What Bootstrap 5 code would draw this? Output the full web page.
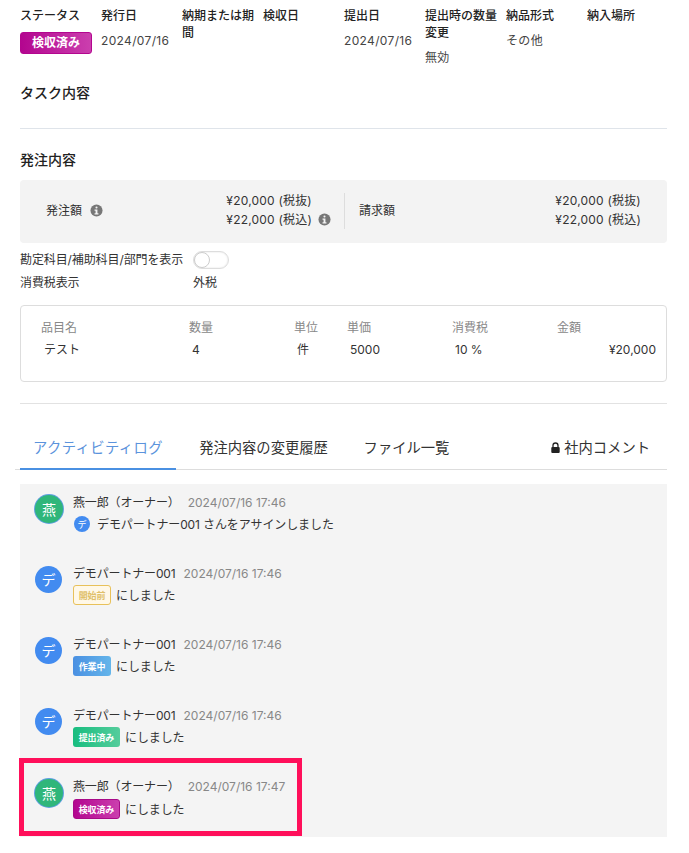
<!doctype html>
<html lang="ja"><head><meta charset="utf-8">
<link href="https://cdn.jsdelivr.net/npm/bootstrap@5.3.0/dist/css/bootstrap.min.css" rel="stylesheet">
<style>
body{font-family:"Inter","Noto Sans CJK JP",sans-serif;font-size:12px;color:#333;background:#fff;line-height:17px}
.pg{padding:7px 22px 0 20px;width:689px}
.meta-cell{width:81px;flex:none;padding-right:6px}
.meta-h{font-weight:500;color:#222;margin-bottom:8px}
.meta-v{color:#444;letter-spacing:.35px}
.st-badge{display:block;width:72px;height:22px;line-height:20px;text-align:center;color:#fff;font-weight:700;font-size:12px;border-radius:3px;background:linear-gradient(90deg,#b3068f,#cb3fae);border:1px solid #b3068f}
.sec-t{font-size:14px;font-weight:500;color:#222;line-height:20px}
.rule1{border:0;border-top:1px solid #dfe4ea;opacity:1;margin:0}
.rule2{border:0;border-top:1px solid #e2e2e2;opacity:1;margin:0}
.sumbox{background:#f3f3f3;border-radius:4px;height:63px;margin-top:10px;padding-bottom:2px}
.sum-l{width:324px;padding-left:26px;padding-right:13px}
.sum-r{flex:1;padding-left:14px;padding-right:26px}
.sum-sep{width:1px;height:36px;background:#ddd}
.sum-v{line-height:18.5px;letter-spacing:.2px}
.sum-row{gap:6px}
.info-i{width:13px;height:13px;flex:none;display:block}
.opt-k{width:173px;letter-spacing:-.1px}
.tgl{width:36px;height:18px;border:1px solid #ddd;border-radius:9px;background:#fff;position:relative;box-shadow:inset 0 0 2px #ddd}
.tgl::before{content:"";position:absolute;left:0;top:0;width:16px;height:16px;border-radius:50%;background:#fff;border:1px solid #ccc}
.itembox{border:1px solid #ddd;border-radius:4px;height:77px;margin-top:13px;padding:13px 10px 0 20px}
.ic1{width:148px}.ic2{width:105px}.ic3{width:53px}.ic4{width:105px}.ic5{width:105px}.ic6{flex:1}
.ihead{color:#888}
.ival{color:#333;padding-top:5px}
.ival>div{padding-left:3px}
.tabsx{margin-top:24px;border-bottom:1px solid #ddd;height:42px;margin-left:-5px;padding-left:5px;font-size:14.3px}
.tabx{height:42px;line-height:24px;padding-top:8px;color:#333;width:156px;text-align:center;flex:none}
.tabx.on{color:#5b93dc;border-bottom:2px solid #4a90e2;letter-spacing:.4px}
.logbox{background:#f4f4f4;margin-top:14px;padding:10px 0 0 0;height:353px}
.logitem{display:flex;height:71px;padding-left:15px;gap:9px}
.logitem.short{height:51px}
.logitem.hilite{height:78px;width:283px;margin-left:-1px;border:5px solid #ff0f5a;padding:15px 0 0 11px}
.logitem.hilite .msg{margin-top:3px}
.av{width:27px;height:27px;border-radius:50%;display:flex;align-items:center;justify-content:center;color:#fff;font-size:14px;background:#428bf0;flex:none;margin-top:1px;margin-left:0;margin-right:2px}
.av.g{width:28px;height:28px;margin:1px 1px 0 0;background:#2fb67a;box-shadow:0 0 0 1px #5e9fe0}
.nm{color:#333;line-height:18px;letter-spacing:-.15px}
.tm{color:#888;margin-left:8px;letter-spacing:0}
.av-s{width:16px;height:16px;border-radius:50%;background:#428bf0;color:#fff;font-size:9px;display:flex;align-items:center;justify-content:center;margin:0 7px 0 1px}
.msg{display:flex;align-items:center;margin-top:2px;height:20px;color:#333;letter-spacing:-.12px}
.tag{display:flex;align-items:center;justify-content:center;height:20px;border-radius:3px;font-size:9px;font-weight:700;color:#fff;margin-right:5px;width:38px}
.tag.w{background:#fff8e8;border:1px solid #e8c15a;color:#e0c06a}
.tag.b{background:linear-gradient(90deg,#4a90e2,#64b5ea)}
.tag.gr{background:linear-gradient(90deg,#17bd7f,#55cd9c);width:47px}
.tag.p{background:linear-gradient(90deg,#b3068f,#cb3fae);width:47px;border:1px solid #a80a88}
</style></head><body>
<svg width="0" height="0" class="d-block position-absolute"><defs><symbol id="ii" viewBox="0 0 14 14"><circle cx="7" cy="7" r="6.5" fill="#777"/><rect x="5.9" y="2.6" width="2.2" height="2.2" rx="1" fill="#f3f3f3"/><path d="M4.9 6h3.1v4h1.1v1.2H4.9V10H6V7.2H4.9z" fill="#f3f3f3"/></symbol></defs></svg>
<div class="pg">
 <div class="d-flex" style="height:75px">
  <div class="meta-cell"><div class="meta-h">ステータス</div><span class="st-badge">検収済み</span></div>
  <div class="meta-cell"><div class="meta-h">発行日</div><div class="meta-v">2024/07/16</div></div>
  <div class="meta-cell"><div class="meta-h">納期または期間</div></div>
  <div class="meta-cell"><div class="meta-h">検収日</div></div>
  <div class="meta-cell"><div class="meta-h">提出日</div><div class="meta-v">2024/07/16</div></div>
  <div class="meta-cell"><div class="meta-h">提出時の数量変更</div><div class="meta-v">無効</div></div>
  <div class="meta-cell"><div class="meta-h">納品形式</div><div class="meta-v">その他</div></div>
  <div class="meta-cell"><div class="meta-h">納入場所</div></div>
 </div>
 <div class="sec-t" style="margin-top:1px">タスク内容</div>
 <hr class="rule1" style="margin-top:25px">
 <div class="sec-t" style="margin-top:21px">発注内容</div>
 <div class="sumbox d-flex align-items-center">
  <div class="sum-l d-flex align-items-center justify-content-between">
   <div class="d-flex align-items-center gap-2"><span>発注額</span><svg class="info-i"><use href="#ii"/></svg></div>
   <div class="sum-v"><div>¥20,000 (税抜)</div><div class="d-flex align-items-center sum-row"><span>¥22,000 (税込)</span><svg class="info-i"><use href="#ii"/></svg></div></div>
  </div>
  <div class="sum-sep"></div>
  <div class="sum-r d-flex align-items-center justify-content-between"><span>請求額</span><div class="sum-v"><div>¥20,000 (税抜)</div><div>¥22,000 (税込)</div></div></div>
 </div>
 <div class="d-flex align-items-center" style="margin-top:7px;height:19px"><div class="opt-k">勘定科目/補助科目/部門を表示</div><div class="tgl"></div></div>
 <div class="d-flex align-items-center" style="margin-top:4px;height:19px"><div class="opt-k">消費税表示</div><div>外税</div></div>
 <div class="itembox d-flex">
  <div class="ic1 ihead">品目名<div class="ival"><div>テスト</div></div></div>
  <div class="ic2 ihead">数量<div class="ival"><div>4</div></div></div>
  <div class="ic3 ihead">単位<div class="ival"><div>件</div></div></div>
  <div class="ic4 ihead">単価<div class="ival"><div>5000</div></div></div>
  <div class="ic5 ihead">消費税<div class="ival"><div>10 %</div></div></div>
  <div class="ic6 ihead">金額<div class="ival text-end">¥20,000</div></div>
 </div>
 <hr class="rule2" style="margin-top:21px">
 <div class="tabsx d-flex">
  <div class="tabx on">アクティビティログ</div>
  <div class="tabx" style="width:175px">発注内容の変更履歴</div>
  <div class="tabx" style="width:111px">ファイル一覧</div>
  <div class="tabx ms-auto d-flex align-items-start justify-content-end gap-1" style="width:124px;padding-right:17px"><svg width="9" height="12" viewBox="0 0 9 12" style="margin-top:6px"><path d="M2 5V3.5a2.5 2.5 0 0 1 5 0V5" fill="none" stroke="#222" stroke-width="1.3"/><rect x=".3" y="5" width="8.4" height="6" rx="1" fill="#222"/></svg><span>社内コメント</span></div>
 </div>
 <div class="logbox">
  <div class="logitem"><div class="av g">燕</div><div><div class="nm">燕一郎（オーナー）<span class="tm">2024/07/16 17:46</span></div><div class="msg"><span class="av-s">デ</span>デモパートナー001 さんをアサインしました</div></div></div>
  <div class="logitem"><div class="av">デ</div><div><div class="nm">デモパートナー001<span class="tm">2024/07/16 17:46</span></div><div class="msg"><span class="tag w">開始前</span>にしました</div></div></div>
  <div class="logitem"><div class="av">デ</div><div><div class="nm">デモパートナー001<span class="tm">2024/07/16 17:46</span></div><div class="msg"><span class="tag b">作業中</span>にしました</div></div></div>
  <div class="logitem short"><div class="av">デ</div><div><div class="nm">デモパートナー001<span class="tm">2024/07/16 17:46</span></div><div class="msg"><span class="tag gr">提出済み</span>にしました</div></div></div>
  <div class="logitem hilite"><div class="av g">燕</div><div><div class="nm">燕一郎（オーナー）<span class="tm">2024/07/16 17:47</span></div><div class="msg"><span class="tag p">検収済み</span>にしました</div></div></div>
 </div>
</div>
<script src="https://cdn.jsdelivr.net/npm/bootstrap@5.3.0/dist/js/bootstrap.bundle.min.js"></script>
</body></html>
